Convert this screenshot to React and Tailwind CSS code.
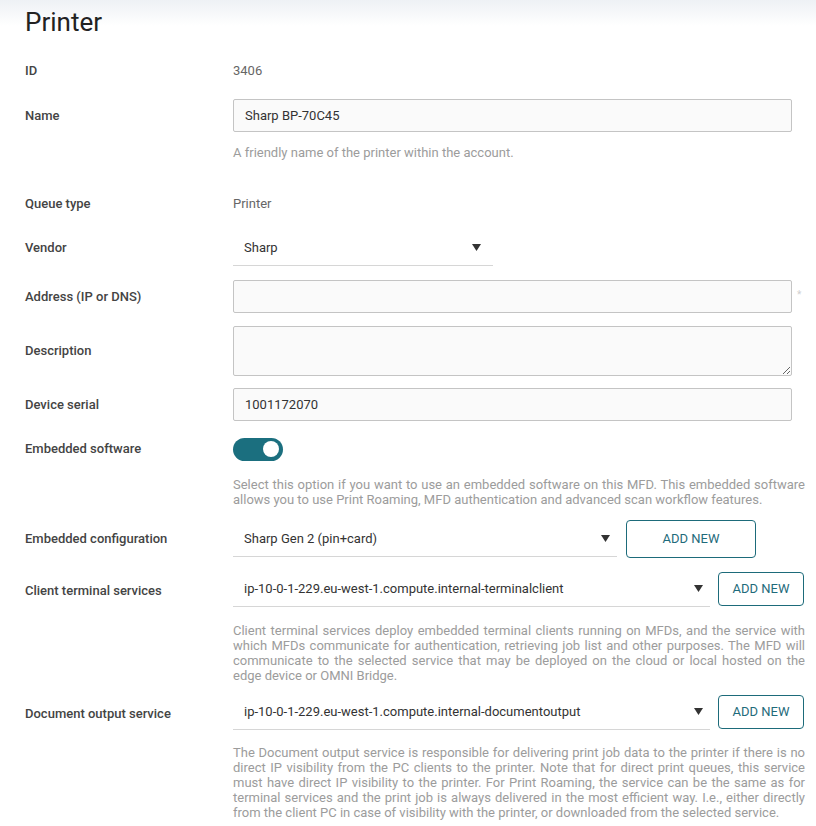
import React from "react";

function Label({ children, className = "" }) {
  return (
    <div className={"w-[208px] shrink-0 text-[13px] font-medium text-[#444] " + className}>
      {children}
    </div>
  );
}

function Arrow() {
  return (
    <svg width="9" height="7" viewBox="0 0 9 7" className="shrink-0">
      <path d="M0 0 L9 0 L4.5 7 Z" fill="#333" />
    </svg>
  );
}

function Select({ value, className = "" }) {
  return (
    <div
      className={
        "flex h-[36px] shrink-0 items-center justify-between border-b border-[#d6d6d6] pl-[11px] text-[13px] text-[#333] " +
        className
      }
    >
      <span>{value}</span>
      <Arrow />
    </div>
  );
}

function Help({ children, className = "" }) {
  return (
    <div className={"ml-[208px] w-[572px] text-justify text-[13px] leading-[15px] text-[#9c9c9c] " + className}>
      {children}
    </div>
  );
}

function Input({ value = "", className = "" }) {
  return (
    <div
      className={
        "flex shrink-0 items-center rounded-[2px] border border-[#c4c4c4] bg-[#fafafa] pl-[11px] text-[13px] text-[#333] " +
        className
      }
    >
      {value}
    </div>
  );
}

export default function App() {
  return (
    <div className="min-h-[826px] w-[816px] overflow-hidden bg-[linear-gradient(to_bottom,#eef1f5,#ffffff_26px)] px-[25px] font-['Roboto',sans-serif]">
      <h1 className="pt-[7px] text-[26px] leading-[30px] font-normal text-[#222]">Printer</h1>

      <div className="mt-[17px] flex h-[34px] items-center">
        <Label>ID</Label>
        <div className="text-[13px] text-[#666]">3406</div>
      </div>

      <div className="mt-[11px] flex items-center">
        <Label>Name</Label>
        <Input value="Sharp BP-70C45" className="h-[33px] w-[559px]" />
      </div>
      <Help className="mt-[13px]">A friendly name of the printer within the account.</Help>

      <div className="mt-[27px] flex h-[34px] items-center">
        <Label>Queue type</Label>
        <div className="text-[13px] text-[#666]">Printer</div>
      </div>

      <div className="mt-[9px] flex items-center">
        <Label>Vendor</Label>
        <Select value="Sharp" className="w-[260px] pr-[12px]" />
      </div>

      <div className="mt-[14px] flex items-center">
        <Label>Address (IP or DNS)</Label>
        <Input className="h-[33px] w-[559px]" />
        <span className="ml-[5px] -mt-[4px] text-[10px] text-[#cfcfcf]">*</span>
      </div>

      <div className="mt-[13px] flex items-center">
        <Label>Description</Label>
        <textarea
          className="block h-[50px] w-[559px] shrink-0 resize-y rounded-[2px] border border-[#c4c4c4] bg-[#fafafa] outline-none"
          defaultValue=""
        />
      </div>

      <div className="mt-[12px] flex items-center">
        <Label>Device serial</Label>
        <Input value="1001172070" className="h-[33px] w-[559px]" />
      </div>

      <div className="mt-[11px] flex h-[34px] items-center">
        <Label>Embedded software</Label>
        <div className="flex h-[23px] w-[50px] items-center justify-end rounded-full bg-[#1b6f7f] pr-[4px]">
          <div className="h-[16px] w-[16px] rounded-full bg-white" />
        </div>
      </div>
      <Help className="mt-[11px]">
        Select this option if you want to use an embedded software on this MFD. This embedded software allows you to
        use Print Roaming, MFD authentication and advanced scan workflow features.
      </Help>

      <div className="mt-[13px] flex items-center">
        <Label>Embedded configuration</Label>
        <Select value="Sharp Gen 2 (pin+card)" className="w-[384px] pr-[7px]" />
        <button className="ml-[9px] h-[38px] w-[130px] shrink-0 rounded-[4px] border border-[#1d6b7a] text-[13px] text-[#1f6b7b]">
          ADD NEW
        </button>
      </div>

      <div className="mt-[13px] flex items-center">
        <Label className="pt-[4px]">Client terminal services</Label>
        <Select value="ip-10-0-1-229.eu-west-1.compute.internal-terminalclient" className="w-[477px] pr-[7px]" />
        <button className="ml-[8px] h-[34px] w-[86px] shrink-0 rounded-[4px] border border-[#1d6b7a] text-[13px] text-[#1f6b7b]">
          ADD NEW
        </button>
      </div>
      <Help className="mt-[16px]">
        Client terminal services deploy embedded terminal clients running on MFDs, and the service with which MFDs
        communicate for authentication, retrieving job list and other purposes. The MFD will communicate to the
        selected service that may be deployed on the cloud or local hosted on the edge device or OMNI Bridge.
      </Help>

      <div className="mt-[11px] flex items-center">
        <Label className="pt-[4px]">Document output service</Label>
        <Select value="ip-10-0-1-229.eu-west-1.compute.internal-documentoutput" className="w-[477px] pr-[7px]" />
        <button className="ml-[8px] h-[34px] w-[86px] shrink-0 rounded-[4px] border border-[#1d6b7a] text-[13px] text-[#1f6b7b]">
          ADD NEW
        </button>
      </div>
      <Help className="mt-[15px]">
        The Document output service is responsible for delivering print job data to the printer if there is no direct
        IP visibility from the PC clients to the printer. Note that for direct print queues, this service must have
        direct IP visibility to the printer. For Print Roaming, the service can be the same as for terminal services
        and the print job is always delivered in the most efficient way. I.e., either directly from the client PC in
        case of visibility with the printer, or downloaded from the selected service.
      </Help>
    </div>
  );
}
